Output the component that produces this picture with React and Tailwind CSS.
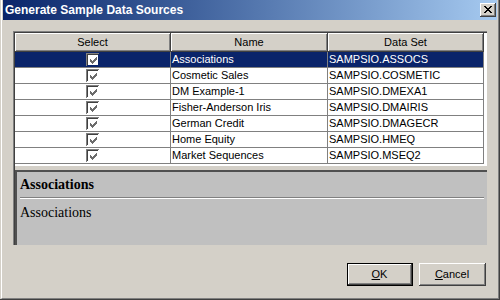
import React from "react";

const rows = [
  ["Associations", "SAMPSIO.ASSOCS"],
  ["Cosmetic Sales", "SAMPSIO.COSMETIC"],
  ["DM Example-1", "SAMPSIO.DMEXA1"],
  ["Fisher-Anderson Iris", "SAMPSIO.DMAIRIS"],
  ["German Credit", "SAMPSIO.DMAGECR"],
  ["Home Equity", "SAMPSIO.HMEQ"],
  ["Market Sequences", "SAMPSIO.MSEQ2"],
];

// classic 7x7 pixel check mark
const Check = () => (
  <div className="w-[13px] h-[13px] border-t border-l border-[#808080] border-b-white border-r-white">
    <div className="w-[11px] h-[11px] bg-white border-t border-l border-[#404040] border-b-[#d4d0c8] border-r-[#d4d0c8] flex items-center justify-center">
      <svg width="7" height="7" viewBox="0 0 7 7" shapeRendering="crispEdges">
        <path
          d="M6 0h1v1H6zM5 1h2v1H5zM0 2h1v1H0zM4 2h3v1H4zM0 3h2v1H0zM3 3h3v1H3zM0 4h5v1H0zM1 5h3v1H1zM2 6h1v1H2z"
          fill="#6b6b6b"
        />
      </svg>
    </div>
  </div>
);

const HeaderCell = ({ children }) => (
  <div className="h-[19px] flex items-center justify-center bg-[#d4d0c8] border-r border-b border-[#404040] shadow-[inset_1px_1px_0_#ffffff,inset_-1px_-1px_0_#808080]">
    {children}
  </div>
);

const Button = ({ label, def }) => (
  <div className={"h-[23px] flex " + (def ? "w-[66px] border border-black" : "w-[67px]")}>
    <div className="flex-1 flex items-center justify-center bg-[#d4d0c8] border-r border-b border-[#404040] shadow-[inset_1px_1px_0_#ffffff,inset_-1px_-1px_0_#808080] text-[11px] text-black">
      <span>
        <span className="underline">{label[0]}</span>
        {label.slice(1)}
      </span>
    </div>
  </div>
);

export default function App() {
  return (
    <div className="w-[500px] h-[300px] bg-[#d4d0c8] flex border-r border-b border-[#404040] pl-px font-['Liberation_Sans',Arial,sans-serif]">
      <div className="flex-1 flex flex-col border-l border-white border-r border-b border-r-[#808080] border-b-[#808080] px-px pb-px">
        {/* Title bar */}
        <div className="h-[20px] flex items-center bg-gradient-to-r from-[#0a246a] to-[#a6caf0] pl-[2px] pr-[1px]">
          <span className="text-white text-[12px] font-bold leading-none">
            Generate Sample Data Sources
          </span>
          <div className="ml-auto w-[16px] h-[14px] flex items-center justify-center bg-[#d4d0c8] border-r border-b border-[#404040] shadow-[inset_1px_1px_0_#ffffff,inset_-1px_-1px_0_#808080]">
            <svg width="8" height="7" viewBox="0 0 8 7" shapeRendering="crispEdges">
              <path d="M0 0h2l2 2.5L6 0h2L5 3.5 8 7H6L4 4.5 2 7H0l3-3.5z" fill="#000" />
            </svg>
          </div>
        </div>

        {/* Body */}
        <div className="flex-1 flex flex-col px-[10px] pt-[11px]">
          <div className="h-[214px] flex border-t border-l border-[#808080] border-b-white border-r-white">
            <div className="flex-1 flex flex-col border-t border-l border-[#404040] border-b-[#d4d0c8] border-r-[#d4d0c8]">
              {/* Table */}
              <div className="h-[133px] bg-white flex flex-col text-[11px] text-black">
                <div className="grid grid-cols-[156px_157px_156px]">
                  <HeaderCell>Select</HeaderCell>
                  <HeaderCell>Name</HeaderCell>
                  <HeaderCell>Data Set</HeaderCell>
                </div>
                {rows.map(([name, ds], i) => {
                  const sel = i === 0;
                  const cell =
                    "h-[16px] flex items-center border-r border-b border-[#808080] " +
                    (sel ? "bg-[#0a246a] text-white " : "bg-white ");
                  return (
                    <div key={name} className="grid grid-cols-[156px_157px_156px]">
                      <div className={cell + "justify-center"}>
                        <Check />
                      </div>
                      <div className={cell + "pl-[1px]"}>{name}</div>
                      <div className={cell + "pl-[1px]"}>{ds}</div>
                    </div>
                  );
                })}
              </div>
              {/* Splitter */}
              <div className="h-[4px] bg-[#d4d0c8]" />
              {/* Description */}
              <div className="flex-1 bg-[#c0c0c0] border-t-2 border-l-2 border-[#505050] px-[3px] pt-[5px] font-['Liberation_Serif','Times_New_Roman',serif] text-[14px] text-black">
                <div className="font-bold leading-[16px] pb-[4px] border-b border-[#808080]">
                  Associations
                </div>
                <div className="h-px bg-white" />
                <div className="leading-[16px] pt-[6px]">Associations</div>
              </div>
            </div>
          </div>

          {/* Buttons */}
          <div className="mt-[18px] flex justify-end gap-[6px] pr-px">
            <Button label="OK" def />
            <Button label="Cancel" />
          </div>
        </div>
      </div>
    </div>
  );
}
